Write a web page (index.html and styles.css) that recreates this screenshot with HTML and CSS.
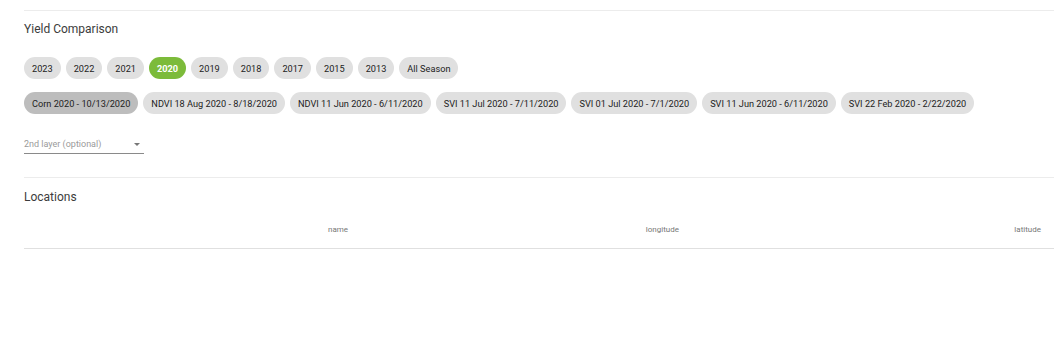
FILE: index.html
```html
<!DOCTYPE html>
<html lang="en">
<head>
  <meta charset="UTF-8">
  <title>Yield Comparison</title>
  <link rel="stylesheet" href="styles.css">
</head>
<body>
  <div class="section">
    <div class="section-title">Yield Comparison</div>

    <div class="chips seasons">
      <span class="chip">2023</span>
      <span class="chip">2022</span>
      <span class="chip">2021</span>
      <span class="chip chip-active">2020</span>
      <span class="chip">2019</span>
      <span class="chip">2018</span>
      <span class="chip">2017</span>
      <span class="chip">2015</span>
      <span class="chip">2013</span>
      <span class="chip">All Season</span>
    </div>

    <div class="chips layers">
      <span class="chip chip-selected">Corn 2020 - 10/13/2020</span>
      <span class="chip">NDVI 18 Aug 2020 - 8/18/2020</span>
      <span class="chip">NDVI 11 Jun 2020 - 6/11/2020</span>
      <span class="chip">SVI 11 Jul 2020 - 7/11/2020</span>
      <span class="chip">SVI 01 Jul 2020 - 7/1/2020</span>
      <span class="chip">SVI 11 Jun 2020 - 6/11/2020</span>
      <span class="chip">SVI 22 Feb 2020 - 2/22/2020</span>
    </div>

    <div class="select">
      <span class="select-label">2nd layer (optional)</span>
      <span class="select-arrow"></span>
    </div>
  </div>

  <div class="section">
    <div class="section-title locations-title">Locations</div>
    <div class="table-head">
      <div class="th">name</div>
      <div class="th">longitude</div>
      <div class="th">latitude</div>
    </div>
  </div>
</body>
</html>
```

FILE: styles.css
```css
body {
  margin: 0;
  padding: 10px 0 0 24px;
  font-family: Roboto, "Liberation Sans", Arial, sans-serif;
  color: #333;
  background: #fff;
}
.section {
  border-top: 1px solid #ececec;
}
.section-title {
  font-size: 12px;
  line-height: 16px;
  color: #3c3c3c;
  margin-top: 10px;
}
.chips {
  display: flex;
  flex-wrap: wrap;
  gap: 5px;
}
.seasons {
  margin-top: 20px;
}
.layers {
  margin-top: 13px;
}
.chip {
  display: inline-flex;
  align-items: center;
  height: 22px;
  padding: 0 8px;
  border-radius: 11px;
  background-color: #e0e0e0;
  color: #222;
  font-size: 9.2px;
  white-space: nowrap;
}
.chip-active {
  background-color: #7cbb3a;
  color: #fff;
  font-weight: bold;
}
.chip-selected {
  background-color: #bdbdbd;
}
.select {
  width: 120px;
  margin-top: 22px;
  display: flex;
  align-items: center;
  justify-content: space-between;
  height: 16px;
  padding-bottom: 1px;
  border-bottom: 1px solid #8a8a8a;
}
.select-label {
  font-size: 9px;
  color: #9a9a9a;
}
.select-arrow {
  width: 0;
  height: 0;
  margin-right: 4px;
  border-left: 3px solid transparent;
  border-right: 3px solid transparent;
  border-top: 3px solid #777;
}
.section + .section {
  margin-top: 23px;
}
.locations-title {
  margin-top: 11px;
}
.table-head {
  display: grid;
  grid-template-columns: 337px 331px 1fr;
  height: 38px;
  margin-top: 5px;
  border-bottom: 1px solid #e0e0e0;
}
.th {
  display: flex;
  align-items: center;
  justify-content: flex-end;
  padding-right: 13px;
  font-size: 8px;
  color: #777;
}
```
